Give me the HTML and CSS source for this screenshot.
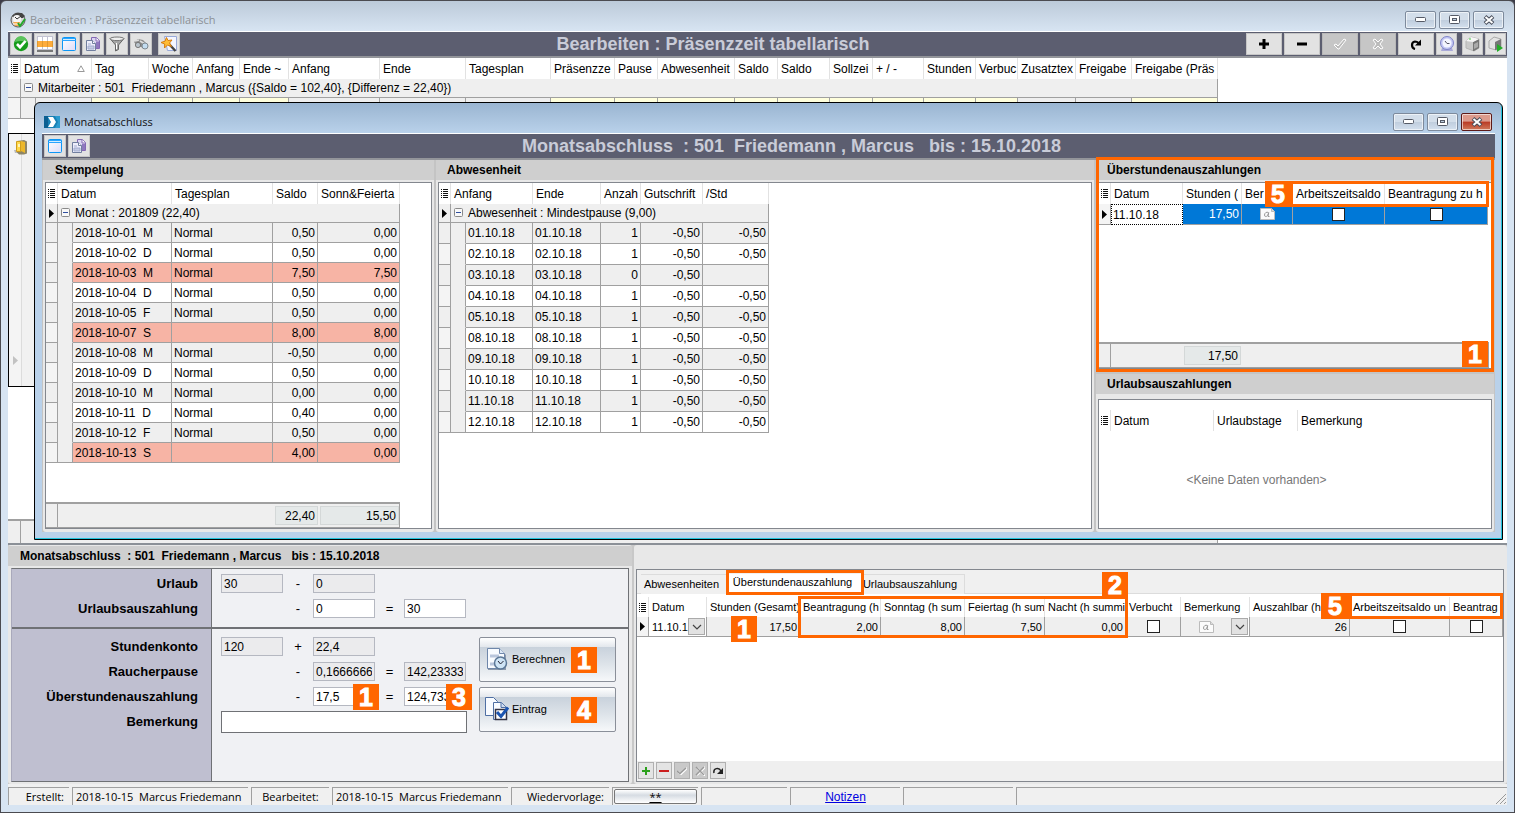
FILE: index.html
```html
<!DOCTYPE html>
<html lang="de">
<head>
<meta charset="utf-8">
<title>Bearbeiten : Präsenzzeit tabellarisch</title>
<link rel="stylesheet" href="styles.css">
</head>
<body>
<svg class="defs" aria-hidden="true">
  <symbol id="i-list" viewBox="0 0 7 9"><path d="M0 .5h1M2 .5h5M0 2.5h1M2 2.5h5M0 4.5h1M2 4.5h5M0 6.5h1M2 6.5h5M0 8.5h1M2 8.5h5" stroke="#111" fill="none"/></symbol>
  <symbol id="i-arrow" viewBox="0 0 5 9"><path d="M0 0l5 4.500L0 9z"/></symbol>
  <symbol id="i-minus" viewBox="0 0 9 9"><rect x=".5" y=".5" width="8" height="8" rx="1" fill="#f8f8f8" stroke="#8a8a8a"/><path d="M2 4.500h5" stroke="#2f4f9f"/></symbol>
  <symbol id="i-window" viewBox="0 0 16 16"><defs><linearGradient id="gw" x2="1" y2="1"><stop offset="0" stop-color="#fff"/><stop offset="1" stop-color="#dcdcf8"/></linearGradient></defs><rect x="1.500" y="1.500" width="13" height="13" rx="1" fill="url(#gw)" stroke="#0d96f5"/><path d="M1 2.500h14M1 4.500h14" stroke="#2aa5ff"/><path d="M2 3.500h12" stroke="#d5eeff"/></symbol>
  <symbol id="i-copy" viewBox="0 0 16 16"><path d="M6.500 1.500h5l3 3v8h-8z" fill="#dcd6f2" stroke="#8468b4"/><path d="M11 1.500v3.500h3.500" fill="#fff" stroke="#8468b4"/><path d="M11 6h3v6h-3z" fill="#8f78be"/><path d="M1.500 4.500h6l3 3v7h-9z" fill="#eeeefb" stroke="#717f9f"/><path d="M7.500 4.500v3h3" fill="#fff" stroke="#717f9f"/><path d="M3 8h3M3 10h6v3H3z" fill="#c4cbe2" stroke="#a3add0"/></symbol>
  <symbol id="i-note" viewBox="0 0 15 12"><path d="M.5.5h11l3 3v8H.5z" fill="#fbfbfb" stroke="#bbb"/><path d="M11.500.5v3h3" fill="#ddd" stroke="#bbb"/><path d="M8.500 4.500c-2-1-4 .5-4 2.500s2 2 3.200.3L8.700 4.700 8 8.500h1.500" fill="none" stroke="#999"/></symbol>
  <symbol id="i-down" viewBox="0 0 10 6"><path d="M1 1l4 4 4-4" fill="none" stroke="#444" stroke-width="1.200"/></symbol>
  <symbol id="i-min" viewBox="0 0 11 5"><rect x=".5" y=".5" width="10" height="4" rx="1" fill="#fff" stroke="#555a66"/></symbol>
  <symbol id="i-max" viewBox="0 0 11 9"><rect x=".5" y=".5" width="10" height="8" rx="1" fill="#fff" stroke="#555a66"/><rect x="3.500" y="3.500" width="4" height="2" fill="#bcd" stroke="#555a66"/></symbol>
  <symbol id="i-x" viewBox="0 0 12 10"><path d="M2 1.500l8 7M10 1.500l-8 7" stroke="#484d5a" stroke-width="4"/><path d="M2.500 2l7 6M9.500 2l-7 6" stroke="#fff" stroke-width="2"/></symbol>
</svg>

<main class="window">
  <header class="titlebar">
    <svg class="i16" viewBox="0 0 16 16"><circle cx="8" cy="8" r="7" fill="#d8d8d8" stroke="#555"/><path d="M2 4l4-3h6l3 3-2 2H4z" fill="#444"/><circle cx="7" cy="7" r="4" fill="#f5f5f5"/><path d="M5 5l2 2 4-3" stroke="#333" fill="none"/><path d="M3 10h7v4H5z" fill="#f3a84a"/><path d="M3 12h7" stroke="#fff"/><path d="M8 11l2 3 5-7" fill="none" stroke="#23a82c" stroke-width="2"/></svg>
    <h1>Bearbeiten : Präsenzzeit tabellarisch</h1>
    <div class="winbtns">
      <button aria-label="Minimieren"><svg width="11" height="5"><use href="#i-min"/></svg></button>
      <button aria-label="Maximieren"><svg width="11" height="9"><use href="#i-max"/></svg></button>
      <button aria-label="Schließen"><svg width="12" height="10"><use href="#i-x"/></svg></button>
    </div>
  </header>

  <div class="toolbar">
    <div class="tools">
      <button aria-label="Übernehmen"><svg class="i16" viewBox="0 0 16 16"><circle cx="8" cy="8" r="7.200" fill="#169c1b"/><path d="M2 6a6 6 0 0 1 12 0q-6-2-12 0z" fill="#5cc35c"/><path d="M4 8l3 3.200L12.500 5" fill="none" stroke="#fff" stroke-width="2.600"/></svg></button>
      <button aria-label="Tabelle"><svg class="i16" viewBox="0 0 16 16"><path d="M0 0h16v16H0z" fill="#fff"/><path d="M0 5h16v6H0z" fill="#ffac3c"/><path d="M.5 0v16M5.500 0v16M10.500 0v16M15.500 0v16M0 .5h16M0 13.500h16" stroke="#c3c3d2"/><path d="M0 15h16" stroke="#777" stroke-width="2"/><path d="M.5 5v6M5.500 5v6M10.500 5v6M15.500 5v6" stroke="#e09a30"/></svg></button>
      <button aria-label="Fenster"><svg class="i16"><use href="#i-window"/></svg></button>
      <button aria-label="Kopieren"><svg class="i16"><use href="#i-copy"/></svg></button>
      <button aria-label="Filter"><svg class="i16" viewBox="0 0 16 16"><path d="M1 2.500L6.500 9v6l3-1.500V9L15 2.500z" fill="#a5a5a5" stroke="#666"/><ellipse cx="8" cy="2.800" rx="7" ry="1.800" fill="#eee" stroke="#777"/><path d="M7.500 7v6" stroke="#fff"/></svg></button>
      <button aria-label="Suchen"><svg class="i16" viewBox="0 0 16 16"><path d="M1 6l4-3 5 1 5 5-3 4-4-2-3 0z" fill="#8c8c8c"/><path d="M2 5l4-1M7 5l5 3" stroke="#ddd" stroke-width="1.500"/><circle cx="5" cy="9" r="2.600" fill="#b9c4cc" stroke="#777"/><circle cx="12" cy="10" r="3" fill="#c3dcf0" stroke="#7d8890"/></svg></button>
      <button class="apart" aria-label="Assistent"><svg class="i16" viewBox="0 0 16 16"><path d="M3.500.5h12v14h-9z" fill="#f4f6ff" stroke="#99a9d8"/><path d="M8 8l6.500 7" stroke="#444" stroke-width="2.400"/><path d="M5.500 1.500l1.500 3 4-.5-2.500 3 2 3.500-4-1.500-3 3 .2-4L0 6.500l4-1.300z" fill="#ffbd35" stroke="#d97c0c"/></svg></button>
    </div>
    <h2>Bearbeiten : Präsenzzeit tabellarisch</h2>
    <div class="tools record">
      <button class="wide" aria-label="Neu"><svg width="10" height="10" viewBox="0 0 10 10"><path d="M5 0v10M0 5h10" stroke="#000" stroke-width="3"/></svg></button>
      <button class="wide" aria-label="Löschen"><svg width="10" height="10" viewBox="0 0 10 10"><path d="M0 5h10" stroke="#000" stroke-width="3"/></svg></button>
      <button class="wide off" disabled aria-label="Speichern"><svg width="14" height="12" viewBox="0 0 14 12"><path d="M1 7l2-1 2 2 6-7 2 1-7 9-1 0z" fill="#bbb" stroke="#fff"/></svg></button>
      <button class="wide off" disabled aria-label="Abbrechen"><svg width="12" height="12" viewBox="0 0 12 12"><path d="M1 2l2-1 3 3 3-3 2 1-3 4 3 4-2 1-3-3-3 3-2-1 3-4z" fill="#bbb" stroke="#fff"/></svg></button>
      <button class="wide" aria-label="Aktualisieren"><svg width="12" height="12" viewBox="0 0 12 12"><path d="M5 11C1 10 1 4 5 3.500q2 0 3.500 1.500" fill="none" stroke="#000" stroke-width="2.200"/><path d="M11 1.500v6H5z"/></svg></button>
      <button aria-label="Uhr"><svg class="i16" viewBox="0 0 16 16"><path d="M3 12l-1 3h12l-1-3" fill="#a9a9d8"/><circle cx="8" cy="7" r="6.500" fill="#c4c8f4" stroke="#7f84c8"/><circle cx="8" cy="7" r="4.500" fill="#f4f5ff"/><path d="M6 5l2 2.500h2.500" fill="none" stroke="#556"/></svg></button>
      <button class="apart" aria-label="Paket"><svg class="i16" viewBox="0 0 16 16"><path d="M1 5l5-4 8 2v9l-5 3-8-3z" fill="#c9c9c9" stroke="#b5b5b5"/><path d="M8 6l6-3v9l-5 3H8z" fill="#777"/><path d="M1 5l5-4 8 2-6 3z" fill="#f6f6f6"/><path d="M9 8l4-2v5l-4 2z" fill="#aaa"/><path d="M4 3h2" stroke="#4c4"/></svg></button>
      <button aria-label="Paket starten"><svg class="i16" viewBox="0 0 16 16"><path d="M1 5l5-4 7 2v8l-5 3-7-2z" fill="#e3e3e3" stroke="#aaa"/><path d="M7 6l6-3v8l-5 3H7z" fill="#777"/><path d="M9 8v8l6-4z" fill="#22ad27"/></svg></button>
    </div>
  </div>

  <section class="upper">
    <table class="grid g-main">
      <colgroup><col><col><col><col><col><col><col><col><col><col><col><col><col><col><col><col><col><col><col><col><col><col></colgroup>
      <thead><tr><th class="ind"><svg width="7" height="9"><use href="#i-list"/></svg></th><th colspan="2"><span class="sorted">Datum <svg width="8" height="7" viewBox="0 0 8 7"><path d="M4 .8L7.300 6.500H.7z" fill="none" stroke="#999"/></svg></span></th><th>Tag</th><th>Woche</th><th>Anfang</th><th>Ende ~</th><th>Anfang</th><th>Ende</th><th>Tagesplan</th><th>Präsenzze</th><th>Pause</th><th>Abwesenheit</th><th>Saldo</th><th>Saldo</th><th>Sollzei</th><th>+ / -</th><th>Stunden</th><th>Verbuc</th><th>Zusatztex</th><th>Freigabe</th><th>Freigabe (Präs</th></tr></thead>
      <tbody>
        <tr class="group"><td class="ind"></td><td colspan="21"><svg width="9" height="9"><use href="#i-minus"/></svg>Mitarbeiter : 501&nbsp; Friedemann , Marcus ({Saldo = 102,40}, {Differenz = 22,40})</td></tr>
        <tr><td class="ind"></td><td class="indent"></td><td class="grey"></td><td></td><td></td><td></td><td></td><td class="grey"></td><td class="grey"></td><td class="grey"></td><td></td><td></td><td></td><td></td><td></td><td></td><td></td><td></td><td></td><td class="grey"></td><td class="grey"></td><td></td></tr>
      </tbody>
    </table>
    <div class="rowstrip">
      <svg class="i16" viewBox="0 0 16 16"><path d="M1 11h4v3H2z" fill="#bbb"/><path d="M4 2l7-1 3 1.500v12l-3 1H6l-2-2z" fill="#8d8566"/><path d="M3.500 2.500h4v10h-4z" fill="#ffd84a" stroke="#cf9d1c"/><path d="M8 2l4 1v11l-4-2z" fill="#ecb72a"/><path d="M5 5h2v3H5z" fill="#fff3b8"/></svg>
      <svg class="faint" width="5" height="9"><use href="#i-arrow"/></svg>
    </div>
    <div class="mainfoot"><span></span></div>
  </section>

  <div class="lower">
    <section class="entry">
      <h3>Monatsabschluss &nbsp;: 501 &nbsp;Friedemann , Marcus &nbsp; bis : 15.10.2018</h3>
      <form class="form">
        <div class="part">
          <label for="u1">Urlaub</label>
          <div class="fields"><input id="u1" value="30" readonly><b>-</b><input aria-label="Urlaub genommen" value="0" readonly></div>
          <label for="u2">Urlaubsauszahlung</label>
          <div class="fields"><i></i><b>-</b><input id="u2" value="0"><b>=</b><input aria-label="Urlaub Ergebnis" value="30"></div>
        </div>
        <div class="part big">
          <label for="s1">Stundenkonto</label>
          <div class="fields"><input id="s1" value="120" readonly><b>+</b><input aria-label="Saldo" value="22,4" readonly></div>
          <label for="s2">Raucherpause</label>
          <div class="fields"><i></i><b>-</b><input id="s2" value="0,1666666" readonly><b>=</b><input aria-label="Zwischensumme" value="142,23333" readonly></div>
          <label for="s3">Überstundenauszahlung</label>
          <div class="fields"><i></i><b>-</b><input id="s3" value="17,5"><b>=</b><input aria-label="Restsaldo" value="124,73333"><mark class="tag t-pay">1</mark><mark class="tag t-rest">3</mark></div>
          <label for="s4">Bemerkung</label>
          <div class="fields"><input id="s4" class="long"></div>
        </div>
        <div class="actions">
          <button type="button"><svg width="24" height="24" viewBox="0 0 24 24"><path d="M3 3h13l5 5v15H3z" fill="#8d99aa"/><path d="M2.500 1.500h12l5 5v15h-17z" fill="#f8fbff" stroke="#6f87aa"/><path d="M14.500 1.500v5h5" fill="#dbe7f6" stroke="#6f87aa"/><path d="M5 9h9M5 17h5" stroke="#b9c6dc" stroke-width="3"/><circle cx="15.500" cy="16" r="6" fill="#cfe4f5" stroke="#5b7796" stroke-width="1.500"/><path d="M13 14l2.500 3 3-3" fill="none" stroke="#223"/></svg>Berechnen<mark class="tag t-btn">1</mark></button>
          <button type="button"><svg width="24" height="24" viewBox="0 0 24 24"><path d="M.5.5h8l4 4v14H.5z" fill="#f8fbff" stroke="#4f6fa3"/><path d="M8.500 5.500h8l5 5v12h-13z" fill="#f8fbff" stroke="#4f6fa3"/><path d="M16 5.500v5h5" fill="#cfdcf0" stroke="#4f6fa3"/><rect x="10.500" y="12.500" width="11" height="10" fill="#fff" stroke="#334" stroke-width="1.500"/><path d="M12 15l4 4.500 7-9" fill="none" stroke="#1b54b0" stroke-width="3"/></svg>Eintrag<mark class="tag t-btn">4</mark></button>
        </div>
      </form>
    </section>

    <section class="detail">
      <div class="detailbox">
        <nav class="tabs"><button>Abwesenheiten</button><button class="active">Überstundenauszahlung</button><button>Urlaubsauszahlung</button></nav>
        <table class="grid small g-det">
          <colgroup><col><col><col><col><col><col><col><col><col><col><col><col></colgroup>
          <thead><tr><th class="ind"><svg width="7" height="9"><use href="#i-list"/></svg></th><th>Datum</th><th>Stunden (Gesamt)</th><th>Beantragung (h</th><th>Sonntag (h sum</th><th>Feiertag (h sum</th><th>Nacht (h summi</th><th>Verbucht</th><th>Bemerkung</th><th>Auszahlbar (h</th><th>Arbeitszeitsaldo un</th><th>Beantrag</th></tr></thead>
          <tbody><tr><td class="ind"><svg width="5" height="9"><use href="#i-arrow"/></svg></td><td class="combo"><div><input aria-label="Datum" value="11.10.1"><button aria-label="Datum wählen"><svg width="10" height="6"><use href="#i-down"/></svg></button></div></td><td class="n">17,50</td><td class="n">2,00</td><td class="n">8,00</td><td class="n">7,50</td><td class="n">0,00</td><td class="c"><input type="checkbox" aria-label="Verbucht"></td><td class="combo"><div><span><svg width="15" height="12"><use href="#i-note"/></svg></span><button aria-label="Bemerkung öffnen"><svg width="10" height="6"><use href="#i-down"/></svg></button></div></td><td class="n">26</td><td class="c"><input type="checkbox" aria-label="Arbeitszeitsaldo"></td><td class="c"><input type="checkbox" aria-label="Beantragung"></td></tr></tbody>
        </table>
        <div class="frame f-tab"></div>
        <div class="frame f-sum"></div><mark class="tag t-sum">2</mark>
        <mark class="tag t-hours">1</mark>
        <div class="frame f-saldo"></div><mark class="tag t-saldo">5</mark>
        <div class="minitools">
          <button aria-label="Hinzufügen"><svg width="8" height="8" viewBox="0 0 8 8"><path d="M4 0v8M0 4h8" stroke="#2ca01c" stroke-width="2"/></svg></button>
          <button aria-label="Entfernen"><svg width="10" height="8" viewBox="0 0 10 8"><path d="M0 4h10" stroke="#cc1f1f" stroke-width="2"/></svg></button>
          <button class="off" disabled aria-label="Speichern"><svg width="10" height="8" viewBox="0 0 10 8"><path d="M1 5l3 2 6-6" fill="none" stroke="#fff" stroke-width="2"/><path d="M0 4l3 2.500L9 1" fill="none" stroke="#999" stroke-width="1.500"/></svg></button>
          <button class="off" disabled aria-label="Abbrechen"><svg width="10" height="10" viewBox="0 0 10 10"><path d="M2 2l8 8M10 1l-8 8" stroke="#fff" stroke-width="2"/><path d="M1 1l8 8M9 1L1 9" stroke="#999" stroke-width="1.500"/></svg></button>
          <button aria-label="Aktualisieren"><svg width="10" height="8" viewBox="0 0 10 8"><path d="M1 6C0 1 6 0 8 4" fill="none" stroke="#222" stroke-width="1.500"/><path d="M10 1v6H4z" fill="#222"/></svg></button>
        </div>
      </div>
    </section>
  </div>

  <footer class="status">
    <span class="s1">Erstellt:</span><span class="s2">2018-10-15&nbsp; Marcus Friedemann</span><span class="s3">Bearbeitet:</span><span class="s2">2018-10-15&nbsp; Marcus Friedemann</span><span class="s4">Wiedervorlage:</span><span class="s5"><button><u>**</u></button></span><span class="s5"></span><span class="s6"><a href="#notizen">Notizen</a></span><span class="s6"></span><span class="s7"><svg width="12" height="12" viewBox="0 0 12 12"><path d="M1 11L11 1M5 11l6-6M9 11l2-2" stroke="#999"/></svg></span>
  </footer>

  <div class="dialog" role="dialog" aria-label="Monatsabschluss">
    <header class="titlebar">
      <svg width="16" height="12" viewBox="0 0 16 12"><path d="M0 0h16v12H0z" fill="#1880b5"/><path d="M0 0h4v12H0z" fill="#0b5f92"/><path d="M4 1h5l3 5-3 5H4l3-5z" fill="#fff"/><path d="M11 0h5v12h-5l3-6z" fill="#2a9ace"/></svg>
      <h1>Monatsabschluss</h1>
      <div class="winbtns">
        <button aria-label="Minimieren"><svg width="11" height="5"><use href="#i-min"/></svg></button>
        <button aria-label="Maximieren"><svg width="11" height="9"><use href="#i-max"/></svg></button>
        <button class="close" aria-label="Schließen"><svg width="12" height="10"><use href="#i-x"/></svg></button>
      </div>
    </header>
    <div class="toolbar">
      <div class="tools">
        <button aria-label="Fenster"><svg class="i16"><use href="#i-window"/></svg></button>
        <button aria-label="Kopieren"><svg class="i16"><use href="#i-copy"/></svg></button>
      </div>
      <h2>Monatsabschluss &nbsp;: 501 &nbsp;Friedemann , Marcus &nbsp; bis : 15.10.2018</h2>
    </div>
    <div class="panels">
      <section class="panel p-left">
        <h3>Stempelung</h3>
        <div class="box">
          <table class="grid g-st">
            <colgroup><col><col><col><col><col><col></colgroup>
            <thead><tr><th class="ind"><svg width="7" height="9"><use href="#i-list"/></svg></th><th colspan="2">Datum</th><th>Tagesplan</th><th>Saldo</th><th>Sonn&amp;Feierta</th></tr></thead>
            <tbody>
              <tr class="group"><td class="ind"><svg width="5" height="9"><use href="#i-arrow"/></svg></td><td colspan="5"><svg width="9" height="9"><use href="#i-minus"/></svg>Monat : 201809 (22,40)</td></tr>
              <tr><td class="ind"></td><td class="indent"></td><td>2018-10-01 &nbsp;M</td><td>Normal</td><td class="n">0,50</td><td class="n">0,00</td></tr>
              <tr><td class="ind"></td><td class="indent"></td><td>2018-10-02 &nbsp;D</td><td>Normal</td><td class="n">0,50</td><td class="n">0,00</td></tr>
              <tr class="red"><td class="ind"></td><td class="indent"></td><td>2018-10-03 &nbsp;M</td><td>Normal</td><td class="n">7,50</td><td class="n">7,50</td></tr>
              <tr><td class="ind"></td><td class="indent"></td><td>2018-10-04 &nbsp;D</td><td>Normal</td><td class="n">0,50</td><td class="n">0,00</td></tr>
              <tr><td class="ind"></td><td class="indent"></td><td>2018-10-05 &nbsp;F</td><td>Normal</td><td class="n">0,50</td><td class="n">0,00</td></tr>
              <tr class="red"><td class="ind"></td><td class="indent"></td><td>2018-10-07 &nbsp;S</td><td></td><td class="n">8,00</td><td class="n">8,00</td></tr>
              <tr><td class="ind"></td><td class="indent"></td><td>2018-10-08 &nbsp;M</td><td>Normal</td><td class="n">-0,50</td><td class="n">0,00</td></tr>
              <tr><td class="ind"></td><td class="indent"></td><td>2018-10-09 &nbsp;D</td><td>Normal</td><td class="n">0,50</td><td class="n">0,00</td></tr>
              <tr><td class="ind"></td><td class="indent"></td><td>2018-10-10 &nbsp;M</td><td>Normal</td><td class="n">0,00</td><td class="n">0,00</td></tr>
              <tr><td class="ind"></td><td class="indent"></td><td>2018-10-11 &nbsp;D</td><td>Normal</td><td class="n">0,40</td><td class="n">0,00</td></tr>
              <tr><td class="ind"></td><td class="indent"></td><td>2018-10-12 &nbsp;F</td><td>Normal</td><td class="n">0,50</td><td class="n">0,00</td></tr>
              <tr class="red"><td class="ind"></td><td class="indent"></td><td>2018-10-13 &nbsp;S</td><td></td><td class="n">4,00</td><td class="n">0,00</td></tr>
            </tbody>
          </table>
          <div class="sums"><i class="lead"></i><span class="w43">22,40</span><span class="w79">15,50</span></div>
        </div>
      </section>
      <section class="panel p-mid">
        <h3>Abwesenheit</h3>
        <div class="box">
          <table class="grid g-ab">
            <colgroup><col><col><col><col><col><col><col></colgroup>
            <thead><tr><th class="ind"><svg width="7" height="9"><use href="#i-list"/></svg></th><th colspan="2">Anfang</th><th>Ende</th><th>Anzah</th><th>Gutschrift</th><th>/Std</th></tr></thead>
            <tbody>
              <tr class="group"><td class="ind"><svg width="5" height="9"><use href="#i-arrow"/></svg></td><td colspan="6"><svg width="9" height="9"><use href="#i-minus"/></svg>Abwesenheit : Mindestpause (9,00)</td></tr>
              <tr><td class="ind"></td><td class="indent"></td><td>01.10.18</td><td>01.10.18</td><td class="n">1</td><td class="n">-0,50</td><td class="n">-0,50</td></tr>
              <tr><td class="ind"></td><td class="indent"></td><td>02.10.18</td><td>02.10.18</td><td class="n">1</td><td class="n">-0,50</td><td class="n">-0,50</td></tr>
              <tr><td class="ind"></td><td class="indent"></td><td>03.10.18</td><td>03.10.18</td><td class="n">0</td><td class="n">-0,50</td><td class="n"></td></tr>
              <tr><td class="ind"></td><td class="indent"></td><td>04.10.18</td><td>04.10.18</td><td class="n">1</td><td class="n">-0,50</td><td class="n">-0,50</td></tr>
              <tr><td class="ind"></td><td class="indent"></td><td>05.10.18</td><td>05.10.18</td><td class="n">1</td><td class="n">-0,50</td><td class="n">-0,50</td></tr>
              <tr><td class="ind"></td><td class="indent"></td><td>08.10.18</td><td>08.10.18</td><td class="n">1</td><td class="n">-0,50</td><td class="n">-0,50</td></tr>
              <tr><td class="ind"></td><td class="indent"></td><td>09.10.18</td><td>09.10.18</td><td class="n">1</td><td class="n">-0,50</td><td class="n">-0,50</td></tr>
              <tr><td class="ind"></td><td class="indent"></td><td>10.10.18</td><td>10.10.18</td><td class="n">1</td><td class="n">-0,50</td><td class="n">-0,50</td></tr>
              <tr><td class="ind"></td><td class="indent"></td><td>11.10.18</td><td>11.10.18</td><td class="n">1</td><td class="n">-0,50</td><td class="n">-0,50</td></tr>
              <tr><td class="ind"></td><td class="indent"></td><td>12.10.18</td><td>12.10.18</td><td class="n">1</td><td class="n">-0,50</td><td class="n">-0,50</td></tr>
            </tbody>
          </table>
        </div>
      </section>
      <div class="p-right">
        <section class="panel over">
          <h3>Überstundenauszahlungen</h3>
          <div class="box">
            <table class="grid g-ub">
              <colgroup><col><col><col><col><col><col></colgroup>
              <thead><tr><th class="ind"><svg width="7" height="9"><use href="#i-list"/></svg></th><th>Datum</th><th>Stunden (</th><th>Ber</th><th>Arbeitszeitsaldo</th><th>Beantragung zu h</th></tr></thead>
              <tbody><tr class="sel"><td class="ind"><svg width="5" height="9"><use href="#i-arrow"/></svg></td><td class="cur">11.10.18</td><td class="n">17,50</td><td class="c"><svg width="15" height="12"><use href="#i-note"/></svg></td><td class="c"><input type="checkbox" aria-label="Arbeitszeitsaldo"></td><td class="c"><input type="checkbox" aria-label="Beantragung zu hoch"></td></tr></tbody>
            </table>
            <div class="sums wide"><i class="lead"></i><span class="w57">17,50</span></div>
          </div>
          <div class="frame f-all"></div><mark class="tag t-all">1</mark>
          <div class="frame f-flags"></div><mark class="tag t-flags">5</mark>
        </section>
        <section class="panel vac">
          <h3>Urlaubsauszahlungen</h3>
          <div class="box">
            <table class="grid g-ur">
              <colgroup><col><col><col><col></colgroup>
              <thead><tr><th class="ind"><svg width="7" height="9"><use href="#i-list"/></svg></th><th>Datum</th><th>Urlaubstage</th><th class="last">Bemerkung</th></tr></thead>
            </table>
            <p>&lt;Keine Daten vorhanden&gt;</p>
          </div>
        </section>
      </div>
    </div>
  </div>
</main>
</body>
</html>
```
FILE: styles.css
```css
* { box-sizing: border-box; }
body {
  margin: 0;
  background: #3c3c48;
  font: 12px/14px "Liberation Sans", Arial, sans-serif;
  color: #000;
}
h1, h2, h3, p { margin: 0; }
button, input { font: inherit; color: inherit; margin: 0; }
button { display: inline-flex; align-items: center; justify-content: center; padding: 0; }
svg { flex: none; display: block; }
.defs { position: absolute; width: 0; height: 0; }
.i16 { width: 16px; height: 16px; }

/* windows */
.window {
  position: relative;
  display: flex;
  flex-direction: column;
  min-height: 100vh;
  padding: 0 7px 7px;
  border: 1px solid #4b4b50;
  border-radius: 6px 6px 0 0;
  background: linear-gradient(#bccad9, #d7e4f2 30px);
}
.titlebar { display: flex; align-items: center; gap: 4px; height: 30px; padding: 7px 3px 0 2px; }
.titlebar h1 {
  flex: 1;
  font: 11px/16px "Open Sans", "Noto Sans", sans-serif;
  color: #8c9196;
}
.winbtns { display: flex; gap: 3px; }
.winbtns button {
  width: 31px;
  height: 18px;
  border: 1px solid #7d8a9c;
  border-radius: 2px;
  background: linear-gradient(#d3deea 50%, #bfcddd 50%, #d3e0ee);
  box-shadow: inset 0 0 0 1px #ffffff99;
}
.winbtns .close { border-color: #5d1a18; background: linear-gradient(#dc9a8c 45%, #b93a24 50%, #d07a5c); }
.toolbar {
  display: flex;
  align-items: center;
  border-top: 1px solid #fff;
  border-bottom: 2px solid #93959a;
  height: 27px;
  padding: 0 1px 0 2px;
  background: #5c5e70;
}
.toolbar h2 {
  flex: 1;
  text-align: center;
  font-size: 18px;
  line-height: 24px;
  color: #c9ccd8;
  white-space: nowrap;
}
.tools { display: flex; gap: 2px; }
.tools button { width: 22px; height: 22px; border: 1px solid #c6c6c6; background: #e2e2e2; }
.tools .apart { margin-left: 4px; }
.record button { width: 21px; }
.record .apart { margin-left: 3px; }
.record .wide { width: 36px; }
.tools .off { background: #c6c6c6; border-color: #b8b8b8; }

/* grids */
.grid { table-layout: fixed; border-spacing: 0; width: 0; }
.grid th, .grid td {
  padding: 0 2px;
  overflow: hidden;
  white-space: nowrap;
  text-align: left;
  font-weight: 400;
  border-right: 1px solid #a0a0a0;
}
.grid th { height: 21px; padding: 0 0 0 3px; background: #fff; border-color: #e2e2e2; }
.grid td { height: 20px; border-bottom: 1px solid #a0a0a0; background: #fff; }
.grid .ind { padding: 0; background: #f4f4f4; }
.grid th.ind { background: #fff; }
.ind svg { margin: 0 auto; }
.grid .indent { background: #efefef; border-bottom-color: #efefef; }
.grid tr:last-child .indent { border-bottom-color: #a0a0a0; }
.grid .group td { height: 19px; background: #efefef; padding: 0 3px; }
.grid .group .ind { padding: 0; }
.group td:not(.ind) svg { float: left; margin: 2px 5px 0 0; }
.grid .n { text-align: right; }
.grid .c { text-align: center; }
.c svg { margin: 0 auto; }
input[type="checkbox"] {
  appearance: none;
  display: block;
  width: 13px;
  height: 13px;
  margin: 0 auto;
  border: 1px solid #222;
  background: #fff;
}
.g-st tr:nth-child(even) td, .g-ab tr:nth-child(even) td { background: #efefef; }
.g-ab td { height: 21px; }
.g-st .red td:nth-child(n+3) { background: #f7b4a5; }

.g-st col:nth-child(1), .g-ab col:nth-child(1), .g-ub col:nth-child(1), .g-ur col:nth-child(1), .g-det col:nth-child(1) { width: 12px; }
.g-st col:nth-child(2), .g-ab col:nth-child(2) { width: 15px; }
.g-st col:nth-child(3) { width: 99px; }
.g-st col:nth-child(4) { width: 101px; }
.g-st col:nth-child(5) { width: 45px; }
.g-st col:nth-child(6) { width: 82px; }
.g-ab col:nth-child(3) { width: 67px; }
.g-ab col:nth-child(4) { width: 68px; }
.g-ab col:nth-child(5) { width: 40px; }
.g-ab col:nth-child(6) { width: 62px; }
.g-ab col:nth-child(7) { width: 66px; }
.g-ub col:nth-child(2) { width: 72px; }
.g-ub col:nth-child(3) { width: 59px; }
.g-ub col:nth-child(4) { width: 51px; }
.g-ub col:nth-child(5) { width: 92px; }
.g-ub col:nth-child(6) { width: 103px; }
.g-ur col:nth-child(2) { width: 103px; }
.g-ur col:nth-child(3) { width: 84px; }
.g-ur col:nth-child(4) { width: 90px; }
.g-det col:nth-child(2) { width: 58px; }
.g-det col:nth-child(3) { width: 93px; }
.g-det col:nth-child(4) { width: 81px; }
.g-det col:nth-child(5) { width: 84px; }
.g-det col:nth-child(6) { width: 80px; }
.g-det col:nth-child(7) { width: 81px; }
.g-det col:nth-child(8) { width: 55px; }
.g-det col:nth-child(9) { width: 69px; }
.g-det col:nth-child(10), .g-det col:nth-child(11) { width: 100px; }
.g-det col:nth-child(12) { width: 53px; }
.g-main col:nth-child(1) { width: 13px; }
.g-main col:nth-child(2) { width: 15px; }
.g-main col:nth-child(3), .g-main col:nth-child(21) { width: 56px; }
.g-main col:nth-child(4) { width: 57px; }
.g-main col:nth-child(5) { width: 44px; }
.g-main col:nth-child(6) { width: 47px; }
.g-main col:nth-child(7) { width: 49px; }
.g-main col:nth-child(8) { width: 91px; }
.g-main col:nth-child(9), .g-main col:nth-child(22) { width: 86px; }
.g-main col:nth-child(10) { width: 85px; }
.g-main col:nth-child(11) { width: 64px; }
.g-main col:nth-child(12), .g-main col:nth-child(14), .g-main col:nth-child(16) { width: 43px; }
.g-main col:nth-child(13) { width: 77px; }
.g-main col:nth-child(15), .g-main col:nth-child(18) { width: 52px; }
.g-main col:nth-child(17) { width: 51px; }
.g-main col:nth-child(19) { width: 42px; }
.g-main col:nth-child(20) { width: 58px; }
.g-main td { height: 21px; background: #ffffdc; }
.g-main .grey { background: #efefef; }
.sorted { display: flex; align-items: center; justify-content: space-between; padding-right: 6px; }

/* upper pane */
.upper {
  position: relative;
  flex: 1;
  display: flex;
  flex-direction: column;
  min-height: 487px;
  border-bottom: 2px solid #8b9097;
  background: #fff;
}
.rowstrip {
  position: absolute;
  left: 0;
  top: 75px;
  width: 40px;
  height: 254px;
  padding: 5px 4px;
  border: 1px solid #000;
  background: linear-gradient(90deg, #f4f4f4 12px, #dcdcdc 12px, #dcdcdc 13px, #f1f1f1 13px);
}
.faint { margin-top: 201px; opacity: .2; }
.mainfoot {
  display: flex;
  width: 1210px;
  height: 24px;
  margin-top: auto;
  border: solid #a0a0a0;
  border-width: 2px 1px 0 0;
  background: #efefef;
}
.mainfoot span { width: 13px; border-right: 1px solid #a0a0a0; }

/* lower pane */
.lower { display: flex; gap: 2px; height: 242px; background: #c8c8c8; border-bottom: 3px solid #f0f0f0; }
.entry { width: 624px; padding: 1px 3px 2px; background: #e8e8e8; border-radius: 3px; }
.entry h3 { margin: 0 -3px 2px; padding: 0 12px; font-size: 12px; line-height: 20px; background: #cfcfcf; white-space: nowrap; }
.form { position: relative; height: 214px; border: 1px solid #6f7175; border-left-color: #a9a9bb; background: #f0f1f4; display: flex; flex-direction: column; }
.part {
  display: grid;
  grid-template-columns: 200px 1fr;
  grid-auto-rows: 25px;
  align-content: start;
  padding: 2px 0 6px;
  background: linear-gradient(90deg, #bfbfd0 199px, #6f7175 199px, #6f7175 200px, #f0f1f4 200px);
}
.part.big { flex: 1; padding: 5px 0 0; border-top: 2px solid #6f7175; }
.part label { padding-right: 14px; font-size: 13px; line-height: 25px; font-weight: 700; text-align: right; }
.fields {
  position: relative;
  display: grid;
  grid-template-columns: 62px 30px 62px 29px 62px;
  align-items: center;
  padding-left: 9px;
}
.fields b { font-weight: 400; text-align: center; font-size: 13px; }
.fields input { width: 62px; height: 19px; padding: 0 2px; border: 1px solid #b5b8c1; background: #fff; }
.fields input:read-only { background: #ebebed; }
.fields .long { width: 246px; height: 22px; border-color: #6f7175; }
.actions { position: absolute; left: 467px; top: 68px; width: 137px; display: grid; gap: 5px; }
.actions button {
  position: relative;
  height: 45px;
  justify-content: flex-start;
  gap: 3px;
  padding: 0 0 2px 5px;
  border: 1px solid #8a8f99;
  border-radius: 2px;
  font-size: 11px;
  background: linear-gradient(#fff, #e4e8ed 20%, #c9d2dc 22%, #dde3e9 60%, #f6f8fa);
}

.detail { flex: 1; min-width: 0; padding: 24px 3px 2px 2px; background: #e8e8e8; border-radius: 3px; }
.detailbox {
  position: relative;
  display: flex;
  flex-direction: column;
  height: 213px;
  border: 1px solid #83878e;
  background: #fff;
  font-size: 11px;
}
.tabs { display: flex; height: 24px; padding: 4px 4px 0; background: #f0f0f0; border-bottom: 1px solid #dcdcdc; }
.tabs button { width: 86px; height: 20px; padding: 0 4px 2px 0; border: 1px solid #dcdcdc; border-width: 1px 1px 0 0; background: #f0f0f0; }
.tabs .active { width: 137px; border: 0; background: #fff; padding: 0 6px 4px 0; }
.tabs .active + button { width: 101px; padding-right: 8px; }
.small { margin-top: 3px; }
.small th { height: 20px; }
.small td { height: 19px; background: #efefef; }
.small .combo { padding: 0; background: #fff; }
.combo div { display: flex; align-items: center; height: 19px; }
.combo input { width: 39px; padding: 0 0 0 3px; border: 0; background: none; }
.combo span { flex: 1; display: flex; justify-content: center; align-self: stretch; align-items: center; background: #efefef; }
.combo button { width: 17px; height: 17px; margin-right: 1px; border: 1px solid #aaa; background: #e2e2e2; }
.minitools { display: flex; gap: 2px; margin-top: auto; height: 20px; padding: 1px 1px; background: #efefef; }
.minitools button { width: 16px; height: 17px; border: 1px solid #b0b0b0; background: #e4e4e4; }
.minitools .off { background: #c9c9c9; }

/* status bar */
.status { display: flex; gap: 3px; height: 18px; background: #f0f0f0; font: 11px/17px "Open Sans", "Noto Sans", sans-serif; }
.status span { flex: none; border: solid #a0a0a0; border-width: 1px 0 0 1px; white-space: nowrap; }
.status .s1 { width: 61px; padding-right: 5px; text-align: right; }
.status .s2 { width: 176px; padding-left: 3px; }
.status .s3 { width: 78px; text-align: center; }
.status .s4 { width: 98px; padding-right: 5px; text-align: right; }
.status .s5 { width: 86px; }
.status .s6 { width: 110px; text-align: center; font: 12px/18px "Liberation Sans", Arial, sans-serif; }
.status .s7 { flex: 1; display: flex; align-items: flex-end; justify-content: flex-end; }
.status a { color: #0000e0; }
.s5 button { width: 83px; height: 15px; margin: 1px; border: 1px solid #777; border-radius: 2px; background: linear-gradient(#fff, #d6dce3 40%, #fff); }

/* dialog */
.dialog {
  position: absolute;
  left: 33px;
  right: 11px;
  top: 101px;
  padding: 0 7px 7px;
  border: 1px solid #000;
  border-radius: 6px 6px 0 0;
  background: linear-gradient(#9ab5d1, #b9d1ea 30px);
  box-shadow: inset -1px -1px 0 #22c3dc;
}
.dialog .titlebar h1 { color: #111; }
.dialog .toolbar { padding: 0 2px; }
.panels { display: flex; gap: 2px; padding: 0 1px; background: #c4c4c4; height: 372px; }
.panel { display: flex; flex-direction: column; padding: 0 2px 3px; background: #e8e8e8; border-radius: 3px; }
.panel h3 { margin: 0 -2px 2px; padding-left: 12px; font-size: 12px; line-height: 20px; background: #cfcfcf; }
.box { flex: 1; display: flex; flex-direction: column; border: 1px solid #83878e; background: #fff; }
.p-left { width: 391px; }
.p-mid { flex: 1; }
.p-mid h3, .p-right h3 { padding-left: 11px; }
.p-right { width: 398px; display: flex; flex-direction: column; gap: 2px; }
.sums {
  display: flex;
  gap: 2px;
  width: 354px;
  height: 26px;
  margin-top: auto;
  padding: 2px 0 2px 0;
  border: solid #a0a0a0;
  border-width: 2px 1px 1px 0;
  background: #efefef;
}
.sums .lead { flex: 1; margin: -2px 0; background: linear-gradient(90deg, transparent 11px, #a0a0a0 11px, #a0a0a0 12px, transparent 12px); }
.sums span { padding-right: 2px; border: 1px solid #d4d8d8; background: #e5e9e9; text-align: right; line-height: 19px; }
.w43 { width: 43px; }
.w79 { width: 79px; }
.w57 { width: 57px; }
.sums.wide { width: 390px; }
.sums.wide .lead { flex: none; width: 83px; }
.over { position: relative; height: 212px; }
.vac { flex: 1; }
.vac h3 { margin-bottom: 5px; }
.vac p { margin: 42px 0 0; padding-right: 77px; text-align: center; color: #777; }
.grid tr.sel td { background: #0078d7; color: #fff; height: 21px; }
.grid tr.sel .ind { background: #f4f4f4; }
.grid tr.sel .cur { background: #fff; color: #000; border: 1px dotted #000; padding: 0 1px; }
.g-ur { margin-top: 10px; }
.g-ur .last { border: 0; }

/* callouts */
.frame { position: absolute; border: 3px solid #f60; pointer-events: none; }
.tag {
  position: absolute;
  width: 26px;
  height: 26px;
  background: #f60;
  color: #fff;
  font: 700 25px/26px "Liberation Sans", Arial, sans-serif;
  -webkit-text-stroke: 1px #fff;
  text-align: center;
}
.f-all { left: 0; right: 0; top: -3px; bottom: 0; }
.t-all { right: 6px; bottom: 5px; }
.f-flags { left: 194px; right: 5px; top: 21px; height: 26px; }
.t-flags { left: 169px; top: 21px; }
.f-tab { left: 89px; top: 0; width: 138px; height: 25px; }
.f-sum { left: 161px; top: 26px; width: 330px; height: 42px; }
.t-sum { left: 465px; top: 2px; }
.t-hours { left: 94px; top: 46px; }
.f-saldo { left: 712px; right: 0; top: 23px; height: 26px; }
.t-saldo { left: 684px; top: 23px; width: 28px; }
.t-pay { left: 141px; top: 0; }
.t-rest { left: 234px; top: 0; }
.t-btn { right: 18px; top: 9px; }
```
